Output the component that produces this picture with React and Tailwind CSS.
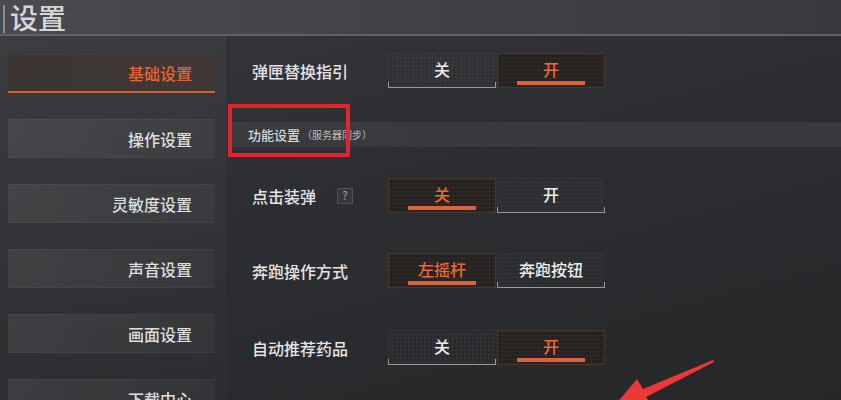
import React from "react";

const grid =
  "bg-[linear-gradient(rgba(255,255,255,0.03)_1px,transparent_1px),linear-gradient(90deg,rgba(255,255,255,0.03)_1px,transparent_1px)] bg-size-[4px_4px]";

function Toggle({ label, active }) {
  if (active) {
    return (
      <div className={`w-[108px] h-[35px] flex flex-col items-center bg-[#24211f] border border-[#46362f] ${grid}`}>
        <div className="flex-1 flex items-center justify-center text-[16px] text-[#ec6a34] font-medium leading-none pt-[2px]">
          {label}
        </div>
        <div className="w-[68px] h-[4px] bg-[#d9643a] mb-[2px]" />
      </div>
    );
  }
  return (
    <div className={`w-[108px] h-[35px] flex flex-col items-center ${grid}`}>
      <div className="flex-1 flex items-center justify-center text-[16px] text-[#ececec] font-medium leading-none pt-[2px]">
        {label}
      </div>
      <div className="w-full h-[6px] border-x border-b border-[#9a9a9a]" />
    </div>
  );
}

function Row({ label, left, right, active, help, className }) {
  return (
    <div className={`flex items-center h-[35px] ${className}`}>
      <div className="w-[160px] pl-[24px] flex items-center text-[16px] text-[#e4e4e4] font-medium whitespace-nowrap">
        <span>{label}</span>
        {help && (
          <span className="ml-[21px] w-[16px] h-[16px] border border-[#505155] bg-[#37383b] text-[11px] text-[#9a9a9a] flex items-center justify-center leading-none">
            ?
          </span>
        )}
      </div>
      <div className="flex gap-[1px]">
        <Toggle label={left} active={active === 0} />
        <Toggle label={right} active={active === 1} />
      </div>
    </div>
  );
}

function NavItem({ label, active }) {
  if (active) {
    return (
      <div className="h-[38px] flex flex-col bg-[linear-gradient(90deg,#3a3533,#403836)]">
        <div className="flex-1 flex items-center justify-end pr-[23px] text-[16px] text-[#e8642f] font-medium">
          {label}
        </div>
        <div className="h-[2px] bg-[#d2602f]" />
      </div>
    );
  }
  return (
    <div className="h-[39px] flex items-center justify-end pr-[23px] text-[16px] text-[#dedede] font-medium bg-[linear-gradient(90deg,rgba(255,255,255,0.07),rgba(255,255,255,0.035))] border-y border-[rgba(255,255,255,0.04)]">
      {label}
    </div>
  );
}

export default function App() {
  return (
    <div
      className="relative w-[841px] h-[400px] overflow-hidden bg-[linear-gradient(165deg,#36373b_0%,#2d2e31_45%,#262729_100%)]"
      style={{ fontFamily: '"Noto Sans CJK SC", "Noto Sans", sans-serif' }}
    >
      {/* header */}
      <div className="h-[36px] flex flex-col bg-[linear-gradient(90deg,#4a4b4f,#3f4044_60%,#393a3e)]">
        <div className="h-[34px] flex items-center pl-[3px]">
          <div className="w-[2px] h-[28px] bg-[#8c8d90] mt-[3px]" />
          <div className="ml-[5px] text-[28px] leading-[32px] text-[#d6d6d6] font-medium">设置</div>
        </div>
        <div className="h-[2px] bg-[#606266]" />
      </div>

      <div className="flex">
        {/* sidebar */}
        <div className="w-[228px] pt-[19px] pl-[8px] pr-[12px] flex flex-col gap-[26px] bg-[linear-gradient(180deg,rgba(255,255,255,0.035),rgba(255,255,255,0.01))] border-r border-[#2a2b2d]">
          <NavItem label="基础设置" active />
          <NavItem label="操作设置" />
          <NavItem label="灵敏度设置" />
          <NavItem label="声音设置" />
          <NavItem label="画面设置" />
          <div className="h-[24px] overflow-hidden">
            <NavItem label="下载中心" />
          </div>
        </div>

        {/* content */}
        <div className="flex-1 flex flex-col">
          <Row label="弹匣替换指引" left="关" right="开" active={1} className="mt-[17px]" />
          <div className="mt-[34px] h-[25px] ml-[2px] flex items-center pl-[18px] bg-[linear-gradient(90deg,#3a3b3e,#38393c)]">
            <span className="text-[13px] text-[#d8d8d8] font-medium">功能设置</span>
            <span className="text-[10px] text-[#bdbdbd] ml-[2px]">（服务器同步）</span>
          </div>
          <Row label="点击装弹" left="关" right="开" active={0} help className="mt-[31px]" />
          <Row label="奔跑操作方式" left="左摇杆" right="奔跑按钮" active={0} className="mt-[40px]" />
          <Row label="自动推荐药品" left="关" right="开" active={1} className="mt-[42px]" />
        </div>
      </div>

      {/* annotation box */}
      <div className="absolute left-[228px] top-[104px] w-[122px] h-[53px] border-[4px] border-[#e5232b]" />

      {/* annotation arrow */}
      <svg className="absolute left-0 top-0" width="841" height="400" viewBox="0 0 841 400">
        <polygon
          points="713,360 643,389 637,379 611,410 652,405 646,397 714,362"
          fill="#ee3737"
        />
      </svg>
    </div>
  );
}
